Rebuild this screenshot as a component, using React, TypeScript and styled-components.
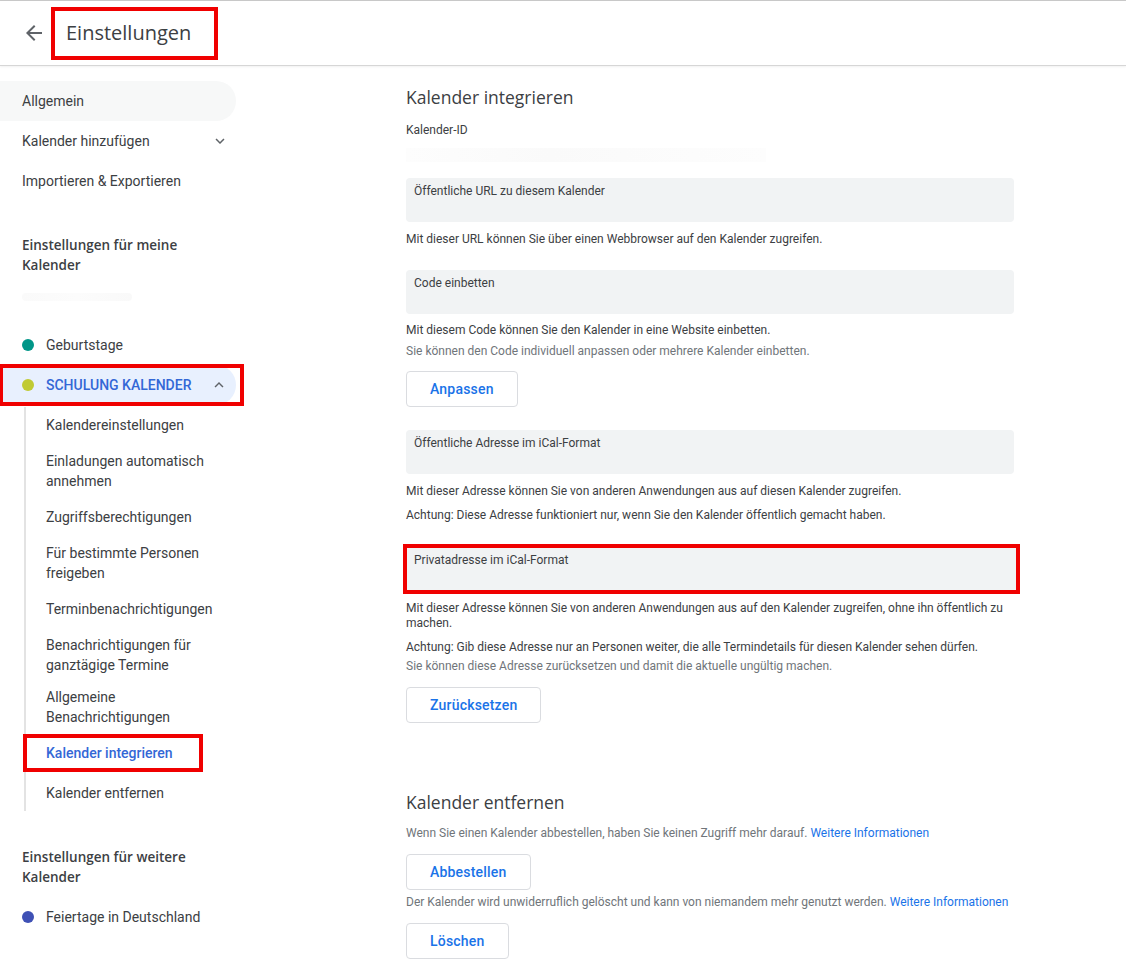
import styled, { createGlobalStyle } from 'styled-components';

const GlobalStyle = createGlobalStyle`
  body {
    margin: 0;
    background: #fff;
    font-family: Roboto, "Noto Sans", Arial, sans-serif;
    color: #3c4043;
  }
`;

const Page = styled.div`
  width: 1126px;
  min-height: 970px;
  border-top: 1px solid #c9c9c9;
  box-sizing: border-box;
`;

const Header = styled.header`
  height: 65px;
  display: flex;
  align-items: center;
  border-bottom: 1px solid #d6d6d6;
  box-shadow: 0 1px 2px rgba(0, 0, 0, 0.06);
  box-sizing: border-box;
`;

const BackButton = styled.button`
  width: 48px;
  height: 48px;
  margin-left: 10px;
  border: 0;
  background: none;
  display: flex;
  align-items: center;
  justify-content: center;
  color: #5f6368;
  padding: 0;
  cursor: pointer;
`;

const Title = styled.h1<{ $marked?: boolean }>`
  margin: 0 0 0 -7px;
  padding: 9px 23px 10px 11px;
  font-family: "Open Sans", Roboto, sans-serif;
  font-weight: 400;
  font-size: 20px;
  line-height: 26px;
  color: #3c4043;
  border: ${(p) => (p.$marked ? '4px solid #f00000' : '4px solid transparent')};
`;

const Body = styled.div`
  display: grid;
  grid-template-columns: 256px 1fr;
`;

const Sidebar = styled.nav`
  padding-top: 15px;
  font-size: 14px;
`;

const NavItem = styled.div<{ $tinted?: boolean }>`
  height: 40px;
  width: 236px;
  display: flex;
  align-items: center;
  justify-content: space-between;
  padding: 0 7px 0 22px;
  box-sizing: border-box;
  border-radius: 0 20px 20px 0;
  background: ${(p) => (p.$tinted ? '#f7f8f8' : 'transparent')};
  color: #3c4043;
`;

const GroupTitle = styled.div<{ $gap: number }>`
  margin: ${(p) => p.$gap}px 0 0;
  padding: 0 60px 0 22px;
  font-family: "Open Sans", Roboto, sans-serif;
  font-weight: 600;
  font-size: 13.5px;
  line-height: 20px;
  color: #3c4043;
`;

const Blur = styled.div`
  margin: 18px 0 0 22px;
  width: 110px;
  height: 8px;
  border-radius: 4px;
  background: linear-gradient(90deg, #fafafa, #fcfcfc, #f9f9f9);
`;

const CalList = styled.div`
  margin-top: 24px;
`;

const MarkBox = styled.div<{ $width: number }>`
  width: ${(p) => p.$width}px;
  outline: 4px solid #f00000;
  outline-offset: -3px;
`;

const CalRow = styled.div<{ $active?: boolean }>`
  height: 40px;
  width: 236px;
  display: flex;
  align-items: center;
  gap: 12px;
  padding: 0 8px 0 22px;
  box-sizing: border-box;
  border-radius: 0 20px 20px 0;
  background: ${(p) => (p.$active ? '#e8f0fe' : 'transparent')};
  color: ${(p) => (p.$active ? '#3367d6' : '#3c4043')};
  font-weight: ${(p) => (p.$active ? 500 : 400)};
  text-transform: ${(p) => (p.$active ? 'uppercase' : 'none')};

  span.label {
    flex: 1;
  }
`;

const Dot = styled.span<{ $color: string }>`
  width: 12px;
  height: 12px;
  border-radius: 50%;
  background: ${(p) => p.$color};
  flex: none;
`;

const SubList = styled.div`
  margin: 2px 0 0 24px;
  border-left: 2px solid #e3e3e3;
`;

const SubItem = styled.div<{ $active?: boolean; $compact?: boolean }>`
  padding: ${(p) => (p.$compact ? '4px' : '8px')} 20px 8px 20px;
  line-height: 20px;
  color: ${(p) => (p.$active ? '#3367d6' : '#3c4043')};
  font-weight: ${(p) => (p.$active ? 500 : 400)};
  margin-bottom: ${(p) => (p.$active ? '4px' : '0')};
`;

const MarkedSub = styled(SubItem)`
  width: 178px;
  box-sizing: border-box;
  margin-left: -2px;
  padding-left: 22px;
  outline: 4px solid #f00000;
  outline-offset: -3px;
`;

const Main = styled.main`
  padding: 19px 0 40px 150px;
  width: 608px;
  font-size: 12px;
`;

const SectionTitle = styled.h2<{ $gap?: number }>`
  margin: ${(p) => p.$gap ?? 0}px 0 0;
  font-family: "Open Sans", Roboto, sans-serif;
  font-weight: 400;
  font-size: 17.5px;
  line-height: 24px;
  color: #3c4043;
`;

const FieldLabel = styled.div`
  margin-top: 13px;
  line-height: 16px;
`;

const HiddenValue = styled.div`
  margin-top: 10px;
  height: 14px;
  width: 360px;
  background: linear-gradient(90deg, #fdfdfd, #fafafa 40%, #fdfdfd);
`;

const Field = styled.div<{ $gap: number; $marked?: boolean }>`
  margin-top: ${(p) => p.$gap}px;
  height: 44px;
  background: #f1f3f4;
  border-radius: ${(p) => (p.$marked ? '0' : '4px')};
  padding: 6px 8px;
  box-sizing: border-box;
  line-height: 14px;
  color: #3c4043;
  outline: ${(p) => (p.$marked ? '4px solid #f00000' : 'none')};
  outline-offset: ${(p) => (p.$marked ? '-1px' : '0')};
  width: ${(p) => (p.$marked ? '611px' : 'auto')};
`;

const Help = styled.p<{ $gap: number; $muted?: boolean }>`
  margin: ${(p) => p.$gap}px 0 0;
  line-height: 15px;
  color: ${(p) => (p.$muted ? '#70757a' : '#3c4043')};
`;

const Link = styled.a`
  color: #1a73e8;
  text-decoration: none;
`;

const Button = styled.button<{ $gap: number }>`
  display: block;
  margin-top: ${(p) => p.$gap}px;
  height: 36px;
  padding: 0 23px;
  border: 1px solid #dadce0;
  border-radius: 4px;
  background: #fff;
  color: #1a73e8;
  font-family: Roboto, sans-serif;
  font-weight: 500;
  font-size: 14px;
  letter-spacing: 0.2px;
  cursor: pointer;
`;

const ArrowBack = () => (
  <svg width="24" height="24" viewBox="0 0 24 24" fill="currentColor">
    <path d="M20 11H7.83l5.59-5.59L12 4l-8 8 8 8 1.41-1.41L7.83 13H20v-2z" />
  </svg>
);

const Chevron = ({ up }: { up?: boolean }) => (
  <svg width="18" height="18" viewBox="0 0 24 24" fill="#5f6368" style={up ? { transform: 'rotate(180deg)' } : undefined}>
    <path d="M16.59 8.59 12 13.17 7.41 8.59 6 10l6 6 6-6z" />
  </svg>
);

const subItems = [
  'Kalendereinstellungen',
  'Einladungen automatisch annehmen',
  'Zugriffsberechtigungen',
  'Für bestimmte Personen freigeben',
  'Terminbenachrichtigungen',
  'Benachrichtigungen für ganztägige Termine',
];

export default function App() {
  return (
    <Page>
      <GlobalStyle />
      <Header>
        <BackButton aria-label="Zurück">
          <ArrowBack />
        </BackButton>
        <Title $marked>Einstellungen</Title>
      </Header>
      <Body>
        <Sidebar>
          <NavItem $tinted>Allgemein</NavItem>
          <NavItem>
            Kalender hinzufügen
            <Chevron />
          </NavItem>
          <NavItem>Importieren &amp; Exportieren</NavItem>

          <GroupTitle $gap={34}>Einstellungen für meine Kalender</GroupTitle>
          <Blur />

          <CalList>
            <CalRow>
              <Dot $color="#009688" />
              <span className="label">Geburtstage</span>
            </CalRow>
            <MarkBox $width={243}>
              <CalRow $active>
                <Dot $color="#c0ca33" />
                <span className="label">Schulung Kalender</span>
                <Chevron up />
              </CalRow>
            </MarkBox>
          </CalList>
          <SubList>
            {subItems.map((s) => (
              <SubItem key={s}>{s}</SubItem>
            ))}
            <SubItem $compact>Allgemeine Benachrichtigungen</SubItem>
            <MarkedSub $active>Kalender integrieren</MarkedSub>
            <SubItem>Kalender entfernen</SubItem>
          </SubList>

          <GroupTitle $gap={36}>Einstellungen für weitere Kalender</GroupTitle>
          <CalRow style={{ marginTop: 10 }}>
            <Dot $color="#3f51b5" />
            <span className="label">Feiertage in Deutschland</span>
          </CalRow>
        </Sidebar>

        <Main>
          <SectionTitle>Kalender integrieren</SectionTitle>
          <FieldLabel>Kalender-ID</FieldLabel>
          <HiddenValue />

          <Field $gap={16}>Öffentliche URL zu diesem Kalender</Field>
          <Help $gap={10}>Mit dieser URL können Sie über einen Webbrowser auf den Kalender zugreifen.</Help>

          <Field $gap={23}>Code einbetten</Field>
          <Help $gap={9}>Mit diesem Code können Sie den Kalender in eine Website einbetten.</Help>
          <Help $gap={6} $muted>
            Sie können den Code individuell anpassen oder mehrere Kalender einbetten.
          </Help>
          <Button $gap={12}>Anpassen</Button>

          <Field $gap={23}>Öffentliche Adresse im iCal-Format</Field>
          <Help $gap={10}>Mit dieser Adresse können Sie von anderen Anwendungen aus auf diesen Kalender zugreifen.</Help>
          <Help $gap={9}>Achtung: Diese Adresse funktioniert nur, wenn Sie den Kalender öffentlich gemacht haben.</Help>

          <Field $gap={24} $marked>
            Privatadresse im iCal-Format
          </Field>
          <Help $gap={10}>
            Mit dieser Adresse können Sie von anderen Anwendungen aus auf den Kalender zugreifen, ohne ihn öffentlich zu
            machen.
          </Help>
          <Help $gap={9}>
            Achtung: Gib diese Adresse nur an Personen weiter, die alle Termindetails für diesen Kalender sehen dürfen.
          </Help>
          <Help $gap={4} $muted>
            Sie können diese Adresse zurücksetzen und damit die aktuelle ungültig machen.
          </Help>
          <Button $gap={13}>Zurücksetzen</Button>

          <SectionTitle $gap={67}>Kalender entfernen</SectionTitle>
          <Help $gap={12} $muted>
            Wenn Sie einen Kalender abbestellen, haben Sie keinen Zugriff mehr darauf. <Link>Weitere Informationen</Link>
          </Help>
          <Button $gap={13}>Abbestellen</Button>
          <Help $gap={5} $muted>
            Der Kalender wird unwiderruflich gelöscht und kann von niemandem mehr genutzt werden.{' '}
            <Link>Weitere Informationen</Link>
          </Help>
          <Button $gap={13}>Löschen</Button>
        </Main>
      </Body>
    </Page>
  );
}
